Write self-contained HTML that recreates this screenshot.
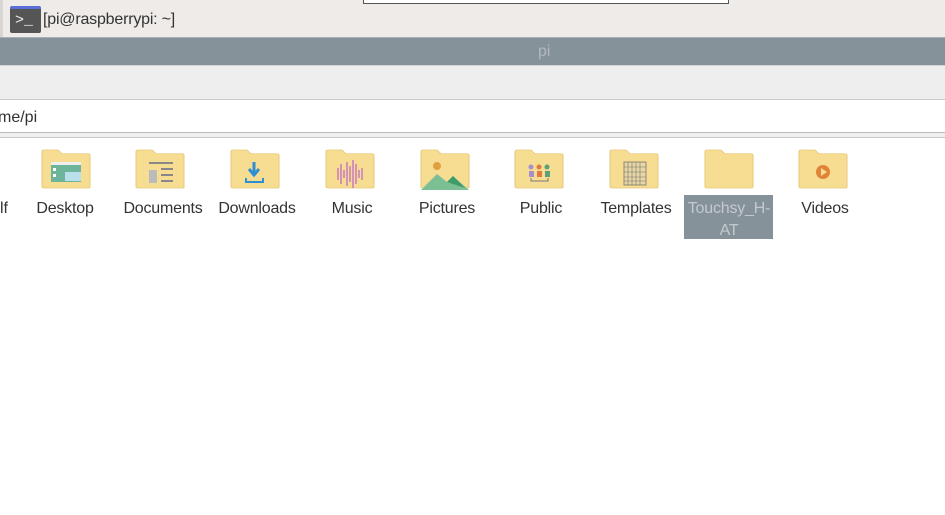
<!DOCTYPE html>
<html><head><style>
body{margin:0;width:945px;height:515px;overflow:hidden;background:#fff;font-family:"Liberation Sans",sans-serif;position:relative}
.a{position:absolute}
.lbl{position:absolute;font-size:16px;color:#333;text-align:center;width:96px;top:200px;letter-spacing:-0.2px}
</style></head><body>
<div class="a" style="left:0;top:0;width:945px;height:37px;background:#efebe9"></div>
<div class="a" style="left:0;top:0;width:3px;height:37px;background:#d8d6d2"></div>
<div class="a" style="left:363px;top:-2px;width:364px;height:5px;border:1px solid #555;border-top:none;background:#fff"></div>
<div class="a" style="left:10px;top:6px;width:31px;height:27px;background:#555;border-radius:2px;border-top:3px solid #5a6fd8;box-sizing:border-box"></div>
<div class="a" style="left:15px;top:12px;color:#eee;font-size:15px;font-family:'Liberation Mono',monospace">&gt;_</div>
<div class="a" style="left:43px;top:11px;font-size:16px;color:#333;letter-spacing:-0.2px">[pi@raspberrypi: ~]</div>
<div class="a" style="left:0;top:37px;width:945px;height:28px;background:#86929a;border-top:1px solid #a9b0b4;box-sizing:border-box"></div>
<div class="a" style="left:538px;top:43px;color:#b0b8bc;font-size:16px">pi</div>
<div class="a" style="left:0;top:65px;width:945px;height:35px;background:#eeeeee;border-top:1px solid #d0d4d6;border-bottom:1px solid #ccc;box-sizing:border-box"></div>
<div class="a" style="left:-2px;top:109px;font-size:16px;color:#333">me/pi</div>
<div class="a" style="left:0;top:132px;width:945px;height:1px;background:#bbb"></div>
<div class="a" style="left:0;top:133px;width:945px;height:4px;background:#efefef"></div>
<div class="a" style="left:0;top:137px;width:945px;height:1px;background:#c8c8c8"></div>
<div class="a" style="left:0;top:200px;font-size:16px;color:#333">lf</div>

<svg class="a" style="left:0;top:140px" width="945" height="60">
<defs><g id="f"><path d="M0 10 V2 Q0 0 2 0 H16 L20 5 H46 Q48 5 48 7 V49 Q48 50 46 50 H2 Q0 50 0 48Z" transform="translate(0,10) scale(1,0.76)" fill="#f7dd92" stroke="#e6c77a" stroke-width="1"/></g></defs>
<use href="#f" x="42"/><use href="#f" x="136"/><use href="#f" x="231"/><use href="#f" x="326"/><use href="#f" x="421"/><use href="#f" x="515"/><use href="#f" x="610"/><use href="#f" x="705"/><use href="#f" x="799"/>
<rect x="51" y="22" width="30" height="20" fill="#6db59a"/><rect x="51" y="22" width="30" height="3" fill="#eee"/><rect x="65" y="32" width="16" height="9" fill="#b9e0ea"/><rect x="53" y="28" width="3" height="3" fill="#fff"/><rect x="53" y="34" width="3" height="3" fill="#fff"/>
<rect x="149" y="22" width="24" height="2" fill="#888"/><rect x="149" y="30" width="8" height="13" fill="#bbb"/><rect x="161" y="28" width="12" height="2" fill="#888"/><rect x="161" y="34" width="12" height="2" fill="#888"/><rect x="161" y="40" width="12" height="2" fill="#888"/>
<path d="M254 22 V33 M249 29 L254 35 L259 29" stroke="#2f8fd0" stroke-width="3" fill="none"/><path d="M246 38 V42 H263 V38" stroke="#2f8fd0" stroke-width="2" fill="none"/>
<g stroke="#c97bc0" stroke-width="1.5"><path d="M338 28V40M341 24V44M344 30V38M347 22V46M350 26V42M353 20V48M356 24V44M359 30V38M362 28V40"/></g>
<circle cx="437" cy="26" r="4" fill="#e0a040"/><path d="M421 50 L437 34 L447 42 L453 36 L469 50Z" fill="#7cbf94"/><path d="M447 42 L453 36 L465 48Z" fill="#3e9b6a"/>
<g><circle cx="531" cy="27" r="2.5" fill="#a68fd0"/><circle cx="539" cy="27" r="2.5" fill="#e07a40"/><circle cx="547" cy="27" r="2.5" fill="#5aa07a"/><rect x="529" y="31" width="5" height="6" fill="#a68fd0"/><rect x="537" y="31" width="5" height="6" fill="#e07a40"/><rect x="545" y="31" width="5" height="6" fill="#5aa07a"/><path d="M531 38V41H548V38" stroke="#777" fill="none"/></g>
<rect x="624" y="22" width="22" height="23" fill="#e8d6a8" stroke="#776" stroke-width="0.8"/><path d="M628 22V45M632 22V45M636 22V45M640 22V45M624 27H646M624 32H646M624 37H646M624 41H646" stroke="#776" stroke-width="0.6"/>
<circle cx="823" cy="32" r="7" fill="#e0843a"/><path d="M821 28 L827 32 L821 36Z" fill="#f7dd92"/>
</svg>
<div class="a" style="left:684px;top:195px;width:89px;height:44px;background:#86929a"></div>
<div class="lbl" style="left:17px">Desktop</div>
<div class="lbl" style="left:115px">Documents</div>
<div class="lbl" style="left:209px">Downloads</div>
<div class="lbl" style="left:304px">Music</div>
<div class="lbl" style="left:399px">Pictures</div>
<div class="lbl" style="left:493px">Public</div>
<div class="lbl" style="left:588px">Templates</div>
<div class="lbl" style="left:681px;color:#c3c9cc;line-height:22px;top:198px">Touchsy_H-<br>AT</div>
<div class="lbl" style="left:777px">Videos</div>
</body></html>
